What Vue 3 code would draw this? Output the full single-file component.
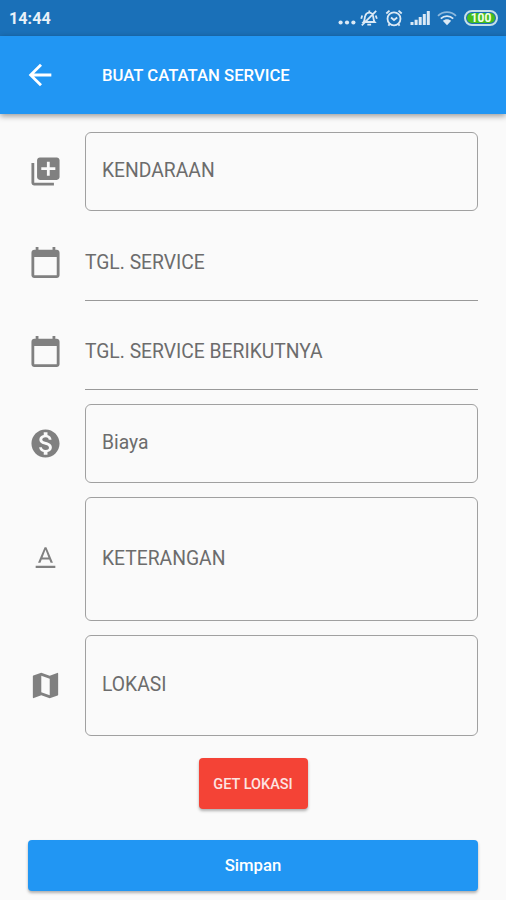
<script setup>
const icons = {
  photos: 'M4 6H2v14c0 1.1.9 2 2 2h14v-2H4V6zm16-4H8c-1.1 0-2 .9-2 2v12c0 1.1.9 2 2 2h12c1.1 0 2-.9 2-2V4c0-1.1-.9-2-2-2zm-1 9h-4v4h-2v-4H9V9h4V5h2v4h4v2z',
  calendar: 'M20 3h-1V1h-2v2H7V1H5v2H4c-1.1 0-2 .9-2 2v16c0 1.1.9 2 2 2h16c1.1 0 2-.9 2-2V5c0-1.1-.9-2-2-2zm0 18H4V8h16v13z',
  money: 'M12 2C6.48 2 2 6.48 2 12s4.48 10 10 10 10-4.48 10-10S17.52 2 12 2zm1.41 16.09V20h-2.67v-1.93c-1.71-.36-3.16-1.46-3.27-3.4h1.96c.1 1.05.82 1.87 2.65 1.87 1.96 0 2.4-.98 2.4-1.59 0-.83-.44-1.61-2.67-2.14-2.48-.6-4.18-1.62-4.18-3.67 0-1.72 1.39-2.84 3.11-3.21V4h2.67v1.95c1.86.45 2.79 1.86 2.85 3.39H14.3c-.05-1.11-.64-1.87-2.22-1.87-1.5 0-2.4.68-2.4 1.64 0 .84.65 1.39 2.67 1.91s4.18 1.39 4.18 3.91c-.01 1.83-1.38 2.83-3.12 3.16z',
  format: 'M5 17.2v1.600h14v-1.600H5zm4.300-4.400h5.400l.9 2.200h1.700L12.650 4h-1.300L6.700 15h1.700l.9-2.200zM12 5.700L14.100 11.300H9.900L12 5.700z',
  map: 'M20.5 3l-.16.03L15 5.1 9 3 3.36 4.9c-.21.07-.36.25-.36.48V20.5c0 .28.22.5.5.5l.16-.03L9 18.9l6 2.1 5.64-1.9c.21-.07.36-.25.36-.48V3.5c0-.28-.22-.5-.5-.5zM15 19l-6-2.11V5l6 2.11V19z'
}

const fields = [
  { id: 'kendaraan', label: 'KENDARAAN', icon: 'photos', type: 'outlined' },
  { id: 'tgl-service', label: 'TGL. SERVICE', icon: 'calendar', type: 'underlined' },
  { id: 'tgl-berikutnya', label: 'TGL. SERVICE BERIKUTNYA', icon: 'calendar', type: 'underlined' },
  { id: 'biaya', label: 'Biaya', icon: 'money', type: 'outlined' },
  { id: 'keterangan', label: 'KETERANGAN', icon: 'format', type: 'outlined' },
  { id: 'lokasi', label: 'LOKASI', icon: 'map', type: 'outlined' }
]
</script>

<template>
  <div class="screen">
    <div class="status-bar">
      <span class="clock">14:44</span>
      <div class="status-icons">
        <svg class="dots" width="18" height="18" viewBox="0 0 18 18">
          <circle cx="2.6" cy="13.5" r="2.1" />
          <circle cx="9" cy="13.5" r="2.1" />
          <circle cx="15.4" cy="13.5" r="2.1" />
        </svg>
        <svg class="bell" width="18" height="18" viewBox="0 0 18 18">
          <path d="M3.5 13c1.5-1.7 1-4.7 1.8-6.4C6 4.6 7.5 3.6 9.3 3.6s3.1 1 3.7 3c.6 1.8.2 4.700 1.700 6.400zM7.300 15.600h3.800M1.800 16.300L16.200 1.800M9.300 3.600V1.500M2.200 6.500L1.200 9.800M15.700 6.500l1.200 3.300" />
        </svg>
        <svg class="alarm" width="18" height="18" viewBox="0 0 18 18">
          <circle cx="9" cy="9.8" r="6.5" />
          <path d="M6 8.500l3 2.500 3.200-2.500M1.300 4.500l3.200-2.900M16.700 4.500l-3.200-2.900M4.500 15l-1 1.700M13.500 15l1 1.700" />
        </svg>
        <svg class="signal" width="20" height="18" viewBox="0 0 20 18">
          <path d="M.5 13h3v3h-3zM4.600 10.800h3V16h-3zM8.700 8h3v8h-3zM12.800 5h3v11h-3zM16.800 2h3v14h-3z" />
        </svg>
        <svg class="wifi" width="20" height="18" viewBox="0 0 20 18">
          <path class="wifi-outer" d="M1 6.800C6 2 14 2 19 6.800" />
          <path d="M3.800 9.600c3.500-3.400 8.900-3.400 12.400 0" />
          <path class="wifi-core" d="M5.800 11.800c2.500-2.200 5.900-2.200 8.400 0L10 16.300z" />
        </svg>
        <span class="battery"><span class="battery-level">100</span></span>
      </div>
    </div>

    <header class="app-bar">
      <svg class="back" width="34" height="34" viewBox="0 0 24 24">
        <path d="M20 11H7.830l5.590-5.590L12 4l-8 8 8 8 1.410-1.410L7.830 13H20v-2z" />
      </svg>
      <h1 class="title">BUAT CATATAN SERVICE</h1>
    </header>

    <main class="form">
      <div v-for="field in fields" :key="field.id" class="row" :class="[`row-${field.type}`, field.id]">
        <svg class="field-icon" viewBox="-0.45 -0.45 24.9 24.9">
          <path :d="icons[field.icon]" />
        </svg>
        <div class="field">{{ field.label }}</div>
      </div>

      <button class="btn btn-location">GET LOKASI</button>
      <button class="btn btn-save">Simpan</button>
    </main>
  </div>
</template>

<style>
body {
  margin: 0;
  background: #fafafa;
}
</style>

<style scoped>
.screen {
  display: flex;
  flex-direction: column;
  width: 506px;
  height: 900px;
  overflow: hidden;
  background: #fafafa;
  font-family: Roboto, sans-serif;
}

.status-bar {
  display: flex;
  align-items: center;
  justify-content: space-between;
  box-sizing: border-box;
  height: 36px;
  padding: 0 8px 0 9px;
  background: #1a70b8;
  color: #e8f1f8;
}

.clock {
  font-size: 16.2px;
  font-weight: 700;
}

.status-icons {
  display: flex;
  align-items: center;
}

.status-icons svg {
  fill: #dbe9f5;
}

.status-icons .bell,
.status-icons .alarm,
.status-icons .wifi {
  fill: none;
  stroke: #dbe9f5;
  stroke-width: 1.8;
}

.status-icons .wifi-core {
  fill: #dbe9f5;
  stroke: none;
}

.wifi-outer {
  opacity: 0.6;
}

.bell {
  margin-left: 4px;
}

.alarm {
  margin-left: 7px;
}

.signal {
  margin-left: 7px;
}

.wifi {
  margin-left: 7px;
}

.battery {
  box-sizing: border-box;
  width: 34px;
  height: 16px;
  margin-left: 7px;
  padding: 1px;
  border: 2px solid #c6dfe8;
  border-radius: 8px;
}

.battery-level {
  display: block;
  height: 10px;
  border-radius: 5px;
  background: #45bd1c;
  color: #f4ffe8;
  font-size: 12px;
  font-weight: 700;
  line-height: 10px;
  text-align: center;
}

.app-bar {
  display: flex;
  align-items: center;
  box-sizing: border-box;
  height: 78px;
  padding-left: 23px;
  background: #2196f3;
  box-shadow: 0 2px 6px rgba(0, 0, 0, 0.4);
  color: #fff;
}

.back {
  fill: #fff;
}

.title {
  margin: 0 0 0 45px;
  font-size: 16.7px;
  font-weight: 500;
}

.form {
  display: flex;
  flex-direction: column;
  padding: 18px 28px 0;
}

.row {
  display: flex;
  align-items: center;
}

.field-icon {
  flex: none;
  width: 35px;
  height: 35px;
  margin-right: 22px;
  fill: #808080;
}

.field {
  flex: 1;
  display: flex;
  align-items: center;
  box-sizing: border-box;
  height: 79px;
  color: #6c6c6c;
  font-size: 19.3px;
}

.row-outlined {
  margin-bottom: 14px;
}

.row-outlined .field {
  padding: 0 16px 2px;
  border: 1px solid #a0a0a0;
  border-radius: 6px;
}

.row-outlined .field-icon {
  margin-bottom: 1px;
}

.row-underlined .field {
  padding-top: 2px;
  border-bottom: 1px solid #999;
}

.row-underlined .field-icon {
  margin-top: 2px;
}

.kendaraan {
  margin-bottom: 11px;
}

.tgl-service {
  margin-bottom: 10px;
}

.tgl-berikutnya {
  margin-bottom: 14px;
}

.keterangan .field {
  height: 124px;
}

.lokasi {
  margin-bottom: 22px;
}

.lokasi .field {
  height: 101px;
}

.btn {
  height: 51px;
  padding: 0;
  border: none;
  border-radius: 4px;
  box-shadow: 0 2px 3px rgba(0, 0, 0, 0.3);
  color: #fff;
  font-family: inherit;
  font-weight: 500;
}

.btn-location {
  align-self: center;
  width: 109px;
  margin-bottom: 31px;
  padding-top: 2px;
  background: #f44336;
  color: #fde3e1;
  font-size: 14.5px;
}

.btn-save {
  background: #2196f3;
  font-size: 16.7px;
}
</style>
